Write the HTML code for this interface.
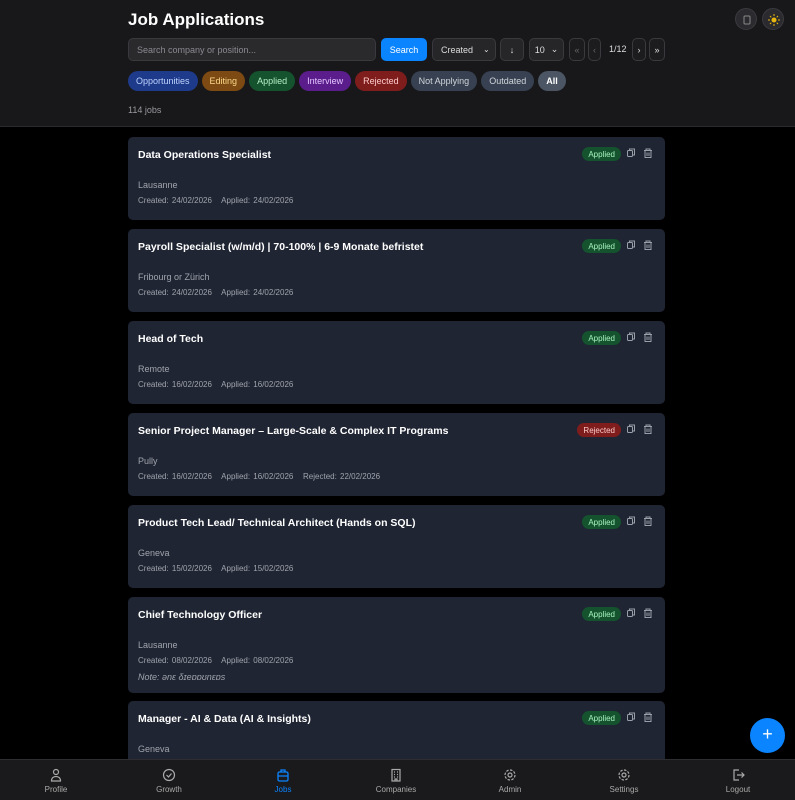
<!DOCTYPE html>
<html><head><meta charset="utf-8"><style>
*{box-sizing:border-box;margin:0;padding:0}
body{width:795px;height:800px;overflow:hidden;background:#000;font-family:"Liberation Sans",sans-serif;color:#fff;position:relative}
.hdr{position:absolute;left:0;top:0;width:795px;height:127px;background:#18181a;border-bottom:1px solid #2a2a2e}
h1{position:absolute;left:128px;top:10px;font-size:17px;font-weight:bold}
.circ{position:absolute;top:8px;width:22px;height:22px;border-radius:50%;background:#2b2b2f;border:1px solid #3a3a3f}
.search{position:absolute;left:128px;top:38px;width:248px;height:23px;border-radius:5px;background:#2a2a2d;border:1px solid #3a3a3e;font-size:9px;color:#8a8a90;padding:6px 8px}
.btn{position:absolute;top:38px;height:23px;border-radius:5px;font-size:9px;display:flex;align-items:center;justify-content:center;border:1px solid #3a3a3e;background:#262629;color:#ddd}
.tags{position:absolute;left:128px;top:71px;display:flex;gap:4px}
.tag{height:20px;border-radius:10px;font-size:9px;padding:0 8px;display:flex;align-items:center}
.cnt{position:absolute;left:128px;top:105px;font-size:9px;color:#9a9aa0}
.card{position:absolute;left:128px;width:537px;background:#1f2533;border-radius:5px}
.card .t{position:absolute;left:10px;top:12px;font-size:10.5px;font-weight:bold}
.card .l{position:absolute;left:10px;top:43px;font-size:9px;color:#a0a4ad}
.card .d{position:absolute;left:10px;top:59px;font-size:8px;color:#a0a4ad;word-spacing:1px}
.card .n{position:absolute;left:10px;top:75px;font-size:9px;color:#a0a4ad;font-style:italic}
.b{position:absolute;top:10px;right:44px;height:14px;border-radius:7px;font-size:8px;padding:0 6px;display:flex;align-items:center}
.ap{background:#14532d;color:#a7f3c0}.rj{background:#7f1d1d;color:#fecaca}
.nav{position:absolute;left:0;top:759px;width:795px;height:41px;background:#1a1a1c;border-top:1px solid #2e2e32}
.ni{position:absolute;top:8px;width:80px;text-align:center;font-size:8px;color:#aaa}
.ni svg{display:block;margin:0 auto 3px}
.fab{position:absolute;left:750px;top:718px;width:35px;height:35px;border-radius:50%;background:#0a84ff;font-size:18px;text-align:center;line-height:33px}
</style></head><body>
<div class="hdr">
<h1>Job Applications</h1>
<div class="circ" style="left:735px"><svg width="22" height="22" viewBox="0 0 22 22"><rect x="8" y="7" width="6" height="8" rx="1" fill="none" stroke="#888" stroke-width="1"/></svg></div>
<div class="circ" style="left:762px"><svg width="22" height="22" viewBox="0 0 22 22"><circle cx="11" cy="11" r="2.5" fill="#e8b60e"/><g stroke="#e8b60e" stroke-width="1"><path d="M11 5v2M11 15v2M5 11h2M15 11h2M7 7l1.3 1.3M13.7 13.7L15 15M7 15l1.3-1.3M13.7 8.3L15 7"/></g></svg></div>
<div class="search">Search company or position...</div>
<div class="btn" style="left:381px;width:46px;background:#0a84ff;border-color:#0a84ff;color:#fff">Search</div>
<div class="btn" style="left:432px;width:64px;justify-content:flex-start;padding-left:8px">Created <span style="margin-left:10px;font-size:8px">⌄</span></div>
<div class="btn" style="left:500px;width:24px">↓</div>
<div class="btn" style="left:529px;width:35px">10 <span style="margin-left:6px">⌄</span></div>
<div class="btn" style="left:569px;width:16px;color:#666;background:#1c1c1e">«</div>
<div class="btn" style="left:588px;width:13px;color:#666;background:#1c1c1e">‹</div>
<div style="position:absolute;left:609px;top:44px;font-size:9px;color:#ddd">1/12</div>
<div class="btn" style="left:632px;width:14px;background:#1c1c1e">›</div>
<div class="btn" style="left:649px;width:16px;background:#1c1c1e">»</div>
<div class="tags">
<div class="tag" style="background:#1e3a8a;color:#bfd4ff">Opportunities</div>
<div class="tag" style="background:#7c4a12;color:#fcd98a">Editing</div>
<div class="tag" style="background:#14532d;color:#b7f0c8">Applied</div>
<div class="tag" style="background:#5b1d8c;color:#e3c6ff">Interview</div>
<div class="tag" style="background:#7f1d1d;color:#fecaca">Rejected</div>
<div class="tag" style="background:#374151;color:#d1d5db">Not Applying</div>
<div class="tag" style="background:#374151;color:#d1d5db">Outdated</div>
<div class="tag" style="background:#4b5563;color:#fff;font-weight:bold">All</div>
</div>
<div class="cnt">114 jobs</div>
</div>

<div class="card" style="top:137px;height:83px"><div class="t">Data Operations Specialist</div><div class="b ap">Applied</div><div class="l">Lausanne</div><div class="d">Created: 24/02/2026 &nbsp; Applied: 24/02/2026</div></div>
<div class="card" style="top:229px;height:83px"><div class="t">Payroll Specialist (w/m/d) | 70-100% | 6-9 Monate befristet</div><div class="b ap">Applied</div><div class="l">Fribourg or Zürich</div><div class="d">Created: 24/02/2026 &nbsp; Applied: 24/02/2026</div></div>
<div class="card" style="top:321px;height:83px"><div class="t">Head of Tech</div><div class="b ap">Applied</div><div class="l">Remote</div><div class="d">Created: 16/02/2026 &nbsp; Applied: 16/02/2026</div></div>
<div class="card" style="top:413px;height:83px"><div class="t">Senior Project Manager – Large-Scale &amp; Complex IT Programs</div><div class="b rj">Rejected</div><div class="l">Pully</div><div class="d">Created: 16/02/2026 &nbsp; Applied: 16/02/2026 &nbsp; Rejected: 22/02/2026</div></div>
<div class="card" style="top:505px;height:83px"><div class="t">Product Tech Lead/ Technical Architect (Hands on SQL)</div><div class="b ap">Applied</div><div class="l">Geneva</div><div class="d">Created: 15/02/2026 &nbsp; Applied: 15/02/2026</div></div>
<div class="card" style="top:597px;height:96px"><div class="t">Chief Technology Officer</div><div class="b ap">Applied</div><div class="l">Lausanne</div><div class="d">Created: 08/02/2026 &nbsp; Applied: 08/02/2026</div><div class="n">Note: ənɛ δɪeɒɒʊnɛɒs</div></div>
<div class="card" style="top:701px;height:90px"><div class="t">Manager - AI &amp; Data (AI &amp; Insights)</div><div class="b ap">Applied</div><div class="l">Geneva</div></div>

<svg style="position:absolute;left:0;top:0" width="795" height="800">
<g fill="none" stroke="#9aa0aa" stroke-width="1">
<g id="i"><rect x="627.5" y="150.5" width="5" height="6" rx="1"/><path d="M629.5 150.5v-1.5h5v6h-2"/><path d="M644 150.5h8M646 150.5v-1.5h4v1.5M645 150.5v7h6v-7M647 152.5v3.5M649 152.5v3.5"/></g>
<use href="#i" y="92"/><use href="#i" y="184"/><use href="#i" y="276"/><use href="#i" y="368"/><use href="#i" y="460"/><use href="#i" y="564"/>
</g></svg>

<div class="fab">+</div>
<div class="nav">
<div class="ni" style="left:16px"><svg width="14" height="14" viewBox="0 0 14 14" fill="none" stroke="#aaa" stroke-width="1.2"><circle cx="7" cy="4" r="2.5"/><path d="M2.5 13c0-3 2-4.5 4.5-4.5s4.5 1.5 4.5 4.5z"/></svg>Profile</div>
<div class="ni" style="left:129px"><svg width="14" height="14" viewBox="0 0 14 14" fill="none" stroke="#aaa" stroke-width="1.2"><circle cx="7" cy="7" r="5.5"/><path d="M4.5 7l2 2 3-3.5"/></svg>Growth</div>
<div class="ni" style="left:243px;color:#0a84ff"><svg width="14" height="14" viewBox="0 0 14 14" fill="none" stroke="#0a84ff" stroke-width="1.3"><rect x="2" y="4" width="10" height="9" rx="1.5"/><path d="M5 4V2h4v2M2 8h10"/></svg>Jobs</div>
<div class="ni" style="left:356px"><svg width="14" height="14" viewBox="0 0 14 14" fill="none" stroke="#aaa" stroke-width="1.2"><rect x="3" y="1.5" width="8" height="11.5"/><path d="M5 4h1M8 4h1M5 6.5h1M8 6.5h1M5 9h1M8 9h1M6 13v-2h2v2"/></svg>Companies</div>
<div class="ni" style="left:470px"><svg width="14" height="14" viewBox="0 0 14 14" fill="none" stroke="#aaa" stroke-width="1.2"><circle cx="7" cy="7" r="2"/><circle cx="7" cy="7" r="5" stroke-dasharray="2.5 1.4"/></svg>Admin</div>
<div class="ni" style="left:584px"><svg width="14" height="14" viewBox="0 0 14 14" fill="none" stroke="#aaa" stroke-width="1.2"><circle cx="7" cy="7" r="2"/><circle cx="7" cy="7" r="5" stroke-dasharray="2.5 1.4"/></svg>Settings</div>
<div class="ni" style="left:698px"><svg width="14" height="14" viewBox="0 0 14 14" fill="none" stroke="#aaa" stroke-width="1.2"><path d="M8 2H3v10h5M6 7h7M10.5 4.5L13 7l-2.5 2.5"/></svg>Logout</div>
</div>
</body></html>
